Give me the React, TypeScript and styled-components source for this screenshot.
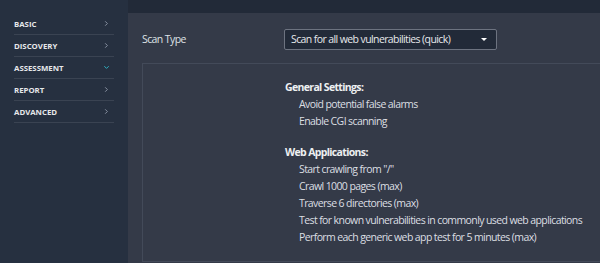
import styled, { createGlobalStyle } from 'styled-components'

const GlobalStyle = createGlobalStyle`
  html, body {
    margin: 0;
    padding: 0;
    background: #343a48;
  }
  body {
    font-family: "Open Sans", "Noto Sans", sans-serif;
    color: #e3e5e8;
  }
`

const navItems = [
  { label: 'BASIC', open: false },
  { label: 'DISCOVERY', open: false },
  { label: 'ASSESSMENT', open: true },
  { label: 'REPORT', open: false },
  { label: 'ADVANCED', open: false },
]

const sections = [
  {
    title: 'General Settings:',
    items: ['Avoid potential false alarms', 'Enable CGI scanning'],
  },
  {
    title: 'Web Applications:',
    items: [
      'Start crawling from "/"',
      'Crawl 1000 pages (max)',
      'Traverse 6 directories (max)',
      'Test for known vulnerabilities in commonly used web applications',
      'Perform each generic web app test for 5 minutes (max)',
    ],
  },
]

function Chevron({ open }: { open: boolean }) {
  return (
    <svg width="7" height="7" viewBox="0 0 8 8">
      {open ? (
        <path d="M1.5 2.5 L4 5 L6.5 2.5" fill="none" stroke="#2fb3c4" strokeWidth="1.1" />
      ) : (
        <path d="M2.5 1.5 L5 4 L2.5 6.5" fill="none" stroke="#8a93a3" strokeWidth="1.1" />
      )}
    </svg>
  )
}

export default function App() {
  return (
    <>
      <GlobalStyle />
      <Layout>
        <Sidebar>
          {navItems.map(item => (
            <NavRow key={item.label}>
              <NavLabel>{item.label}</NavLabel>
              <Chevron open={item.open} />
            </NavRow>
          ))}
        </Sidebar>
        <Main>
          <TopBand />
          <Panel>
            <FieldRow>
              <FieldLabel>Scan Type</FieldLabel>
              <Select>
                <span>Scan for all web vulnerabilities (quick)</span>
                <Caret />
              </Select>
            </FieldRow>
            <Details>
              {sections.map(section => (
                <Section key={section.title}>
                  <SectionTitle>{section.title}</SectionTitle>
                  {section.items.map(text => (
                    <Item key={text}>{text}</Item>
                  ))}
                </Section>
              ))}
            </Details>
          </Panel>
        </Main>
      </Layout>
    </>
  )
}

const Layout = styled.div`
  display: flex;
  width: 600px;
  height: 263px;
  overflow: hidden;
`

const Sidebar = styled.nav`
  width: 128px;
  flex-shrink: 0;
  background: #263040;
  padding: 13px 14px 0 14px;
  box-sizing: border-box;
`

const NavRow = styled.div`
  display: flex;
  align-items: center;
  justify-content: space-between;
  height: 22px;
  border-bottom: 1px solid #3a4352;
  padding-right: 4px;
  box-sizing: border-box;
`

const NavLabel = styled.span`
  font-size: 7.8px;
  font-weight: 700;
  color: #e6e8eb;
`

const Main = styled.div`
  flex: 1;
  display: flex;
  flex-direction: column;
  min-width: 0;
`

const TopBand = styled.div`
  height: 13px;
  background: #222a38;
`

const Panel = styled.div`
  flex: 1;
  background: #343a48;
  padding: 15px 0 0 14px;
  display: flex;
  flex-direction: column;
`

const FieldRow = styled.div`
  display: flex;
  align-items: center;
  height: 22px;
  margin-bottom: 13px;
`

const FieldLabel = styled.div`
  width: 142px;
  font-size: 10.5px;
  letter-spacing: -0.6px;
  color: #dfe2e6;
`

const Select = styled.div`
  width: 213px;
  height: 21px;
  box-sizing: border-box;
  display: flex;
  align-items: center;
  justify-content: space-between;
  padding: 0 9px 0 6px;
  background: #222a38;
  border: 1px solid #6d7380;
  border-radius: 2px;
  font-size: 10.5px;
  letter-spacing: -0.6px;
  color: #e6e8eb;
  white-space: nowrap;
`

const Caret = styled.span`
  width: 0;
  height: 0;
  border-left: 3.5px solid transparent;
  border-right: 3.5px solid transparent;
  border-top: 3.5px solid #ffffff;
`

const Details = styled.div`
  flex: 1;
  border-top: 1px solid #434a59;
  border-left: 1px solid #434a59;
  border-bottom: 1px solid #434a59;
  margin-bottom: 1px;
  padding: 14px 0 0 142px;
`

const Section = styled.div`
  margin-bottom: 13px;
`

const SectionTitle = styled.div`
  font-size: 10.5px;
  font-weight: 700;
  letter-spacing: -0.65px;
  color: #eef0f2;
  height: 18px;
  line-height: 18px;
`

const Item = styled.div`
  font-size: 10.5px;
  letter-spacing: -0.6px;
  color: #dcdfe3;
  padding-left: 14px;
  height: 17px;
  line-height: 17px;
  white-space: nowrap;
`
